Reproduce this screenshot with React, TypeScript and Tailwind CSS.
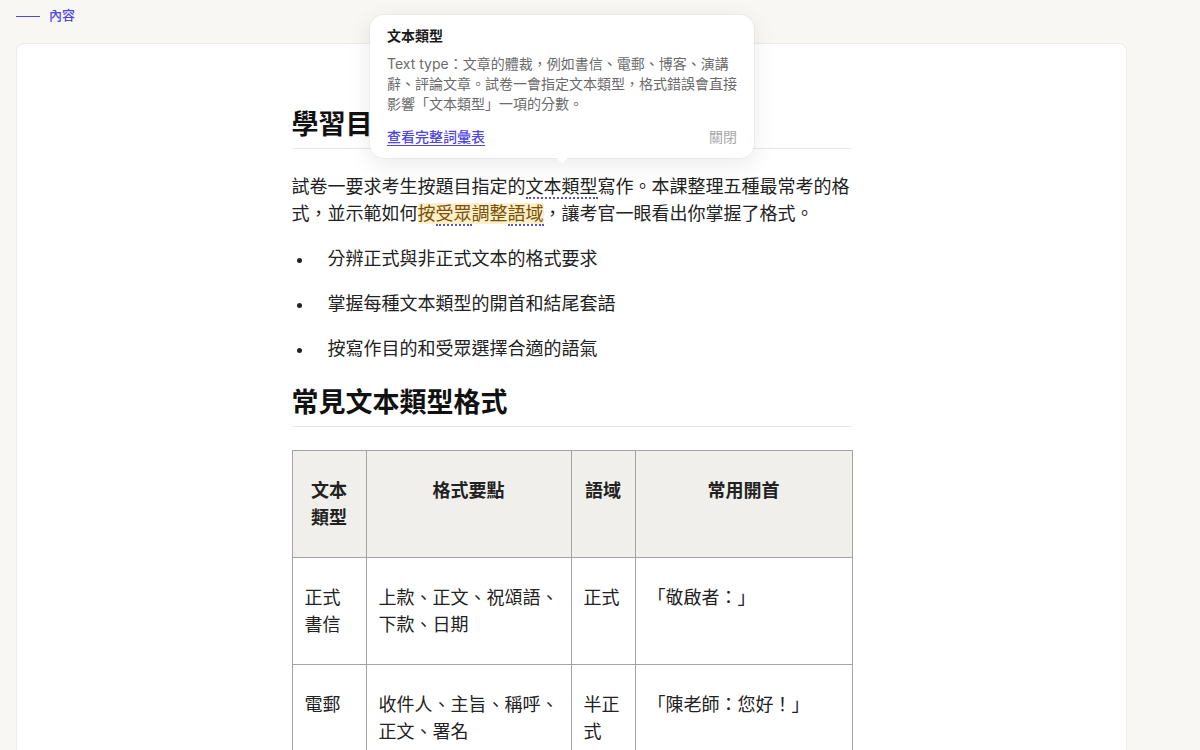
const rows = [
  { type: '正式書信', points: '上款、正文、祝頌語、下款、日期', register: '正式', opening: '「敬啟者：」' },
  { type: '電郵', points: '收件人、主旨、稱呼、正文、署名', register: '半正式', opening: '「陳老師：您好！」' },
  { type: '博客', points: '標題、日期、正文、互動語', register: '非正式', opening: '「大家好！」' },
];

const goals = ['分辨正式與非正式文本的格式要求', '掌握每種文本類型的開首和結尾套語', '按寫作目的和受眾選擇合適的語氣'];

function Term({ children }: { children: React.ReactNode }) {
  return <span className="border-b-2 border-dotted border-[#5b50d6]">{children}</span>;
}

function Tooltip() {
  return (
    <div className="absolute left-[370px] top-[15px] w-[384px] rounded-[14px] bg-white px-[17px] pb-[11px] pt-[11px] shadow-[0_6px_24px_rgba(0,0,0,0.09),0_0_0_1px_rgba(0,0,0,0.03)]">
      <h4 className="text-[14px] font-bold leading-[20px] text-[#1a1a1a]">文本類型</h4>
      <p className="mt-2 text-[14px] leading-[20px] text-[#6b6b6b]">
        Text type：文章的體裁，例如書信、電郵、博客、演講辭、評論文章。試卷一會指定文本類型，格式錯誤會直接影響「文本類型」一項的分數。
      </p>
      <div className="mt-[13px] flex items-center justify-between text-[14px] leading-[20px]">
        <a className="font-medium text-[#4f46e5] underline underline-offset-[3px]">查看完整詞彙表</a>
        <button className="text-[#a8a8a8]">關閉</button>
      </div>
      <div className="absolute -bottom-[4px] left-[188px] h-2 w-2 rotate-45 bg-white" />
    </div>
  );
}

export default function App() {
  return (
    <div className="relative h-screen overflow-hidden bg-[#f8f7f4] font-['Inter','Noto_Sans_CJK_TC',sans-serif] text-[#222]">
      <div className="pl-4 pr-[73px]">
        <div className="flex h-8 items-center gap-[9px]">
          <div className="h-px w-6 bg-[#4f46e5]" />
          <span className="text-[13px] font-medium text-[#4f46e5]">內容</span>
        </div>
        <div className="mt-[11px] rounded-lg border border-[#eeece8] bg-white pb-20 pt-[63px]">
          <div className="mx-auto w-[560px]">
            <h2 className="border-b border-[#e9e7e2] pb-[6px] text-[27px] font-bold leading-[35px] text-[#111]">學習目標</h2>
            <p className="mt-6 text-[18px] leading-[27px]">
              試卷一要求考生按題目指定的<Term>文本類型</Term>寫作。本課整理五種最常考的格式，並示範如何
              <span className="bg-[#fdf0c8] text-[#7a4f0a]">
                按<Term>受眾</Term>調整<Term>語域</Term>
              </span>
              ，讓考官一眼看出你掌握了格式。
            </p>
            <ul className="mt-[18px] space-y-[18px]">
              {goals.map((g) => (
                <li key={g} className="flex items-center text-[18px] leading-[27px]">
                  <span className="ml-[5px] mr-[26px] mt-[3px] h-[5px] w-[5px] shrink-0 rounded-full bg-[#222]" />
                  {g}
                </li>
              ))}
            </ul>
            <h2 className="mt-[23px] border-b border-[#e9e7e2] pb-[6px] text-[27px] font-bold leading-[35px] text-[#111]">
              常見文本類型格式
            </h2>
            <table className="mt-[23px] w-[560px] table-fixed border-collapse text-[18px] leading-[27px]">
              <colgroup>
                <col className="w-[74px]" />
                <col className="w-[205px]" />
                <col className="w-[64px]" />
                <col className="w-[217px]" />
              </colgroup>
              <thead>
                <tr className="bg-[#f0efec]">
                  {['文本類型', '格式要點', '語域', '常用開首'].map((h) => (
                    <th key={h} className="border border-[#a3a3a3] px-3 py-[26px] text-center align-top font-bold">
                      {h}
                    </th>
                  ))}
                </tr>
              </thead>
              <tbody>
                {rows.map((r) => (
                  <tr key={r.type}>
                    <td className="border border-[#a3a3a3] px-3 py-[26px] align-top">{r.type}</td>
                    <td className="border border-[#a3a3a3] px-3 py-[26px] align-top">{r.points}</td>
                    <td className="border border-[#a3a3a3] px-3 py-[26px] align-top">{r.register}</td>
                    <td className="border border-[#a3a3a3] px-3 py-[26px] align-top">{r.opening}</td>
                  </tr>
                ))}
              </tbody>
            </table>
          </div>
        </div>
      </div>
      <Tooltip />
    </div>
  );
}
